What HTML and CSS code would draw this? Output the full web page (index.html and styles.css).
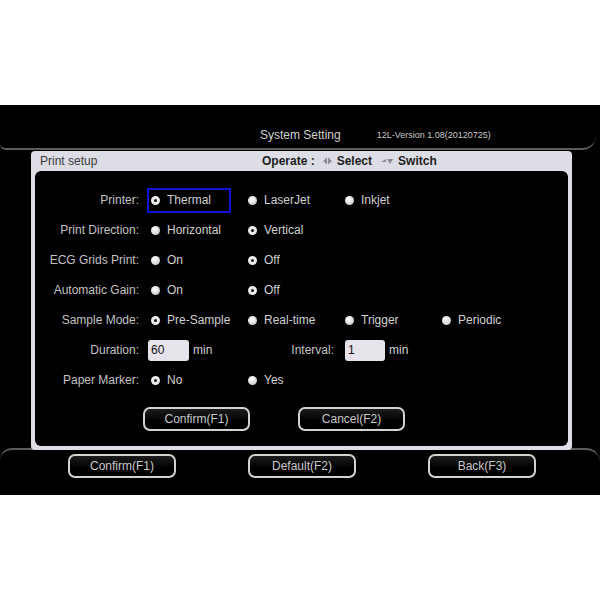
FILE: index.html
```html
<!DOCTYPE html>
<html>
<head>
<meta charset="utf-8">
<title>System Setting</title>
<link rel="stylesheet" href="styles.css">
</head>
<body>
<div class="screen">
  <div class="topbar">
    <span class="title">System Setting</span>
    <span class="version">12L-Version 1.08(20120725)</span>
  </div>
  <div class="panel">
    <div class="phead">
      <span class="ptitle">Print setup</span>
      <span class="operate">Operate :
        <svg class="ico" width="9" height="8" viewBox="0 0 9 8"><path d="M0 4 L4 0.5 L4 7.5 Z M9 4 L5 0.5 L5 7.5 Z" fill="#8a8a90"/></svg>
        Select
        <svg class="ico ico2" width="12" height="8" viewBox="0 0 12 8"><path d="M0 5 L5 2 L5 5 Z" fill="#8a8a90"/><path d="M6 2 L12 2 L9 7 Z" fill="#8a8a90"/></svg>
        Switch</span>
    </div>
    <div class="pbody">
      <div class="form">
        <div class="label">Printer:</div>
        <div class="cell"><span class="opt focus"><i class="radio on"></i>Thermal</span></div>
        <div class="cell"><span class="opt"><i class="radio"></i>LaserJet</span></div>
        <div class="cell"><span class="opt"><i class="radio"></i>Inkjet</span></div>
        <div class="cell"></div>

        <div class="label">Print Direction:</div>
        <div class="cell"><span class="opt"><i class="radio"></i>Horizontal</span></div>
        <div class="cell"><span class="opt"><i class="radio on"></i>Vertical</span></div>
        <div class="cell"></div>
        <div class="cell"></div>

        <div class="label">ECG Grids Print:</div>
        <div class="cell"><span class="opt"><i class="radio"></i>On</span></div>
        <div class="cell"><span class="opt"><i class="radio on"></i>Off</span></div>
        <div class="cell"></div>
        <div class="cell"></div>

        <div class="label">Automatic Gain:</div>
        <div class="cell"><span class="opt"><i class="radio"></i>On</span></div>
        <div class="cell"><span class="opt"><i class="radio on"></i>Off</span></div>
        <div class="cell"></div>
        <div class="cell"></div>

        <div class="label">Sample Mode:</div>
        <div class="cell"><span class="opt"><i class="radio on"></i>Pre-Sample</span></div>
        <div class="cell"><span class="opt"><i class="radio"></i>Real-time</span></div>
        <div class="cell"><span class="opt"><i class="radio"></i>Trigger</span></div>
        <div class="cell"><span class="opt"><i class="radio"></i>Periodic</span></div>

        <div class="label">Duration:</div>
        <div class="cell"><span class="field f1">60</span><span class="unit">min</span></div>
        <div class="label sub">Interval:</div>
        <div class="cell"><span class="field f2">1</span><span class="unit">min</span></div>
        <div class="cell"></div>

        <div class="label">Paper Marker:</div>
        <div class="cell"><span class="opt"><i class="radio on"></i>No</span></div>
        <div class="cell"><span class="opt"><i class="radio"></i>Yes</span></div>
        <div class="cell"></div>
        <div class="cell"></div>
      </div>
      <div class="actions">
        <div class="btn">Confirm(F1)</div>
        <div class="btn">Cancel(F2)</div>
      </div>
    </div>
  </div>
  <div class="footer">
    <div class="btn wide">Confirm(F1)</div>
    <div class="btn wide">Default(F2)</div>
    <div class="btn wide">Back(F3)</div>
  </div>
</div>
</body>
</html>
```
FILE: styles.css
```css
html, body {
  margin: 0;
  padding: 0;
  background: #ffffff;
  font-family: "Liberation Sans", Arial, sans-serif;
  font-size: 12px;
}

.screen {
  margin-top: 105px;
  height: 390px;
  background: #000;
  overflow: hidden;
}

.topbar {
  box-sizing: border-box;
  width: 596px;
  height: 45px;
  border-bottom: 2px solid #5c5c5c;
  border-bottom-left-radius: 6px;
  border-bottom-right-radius: 14px;
  display: flex;
  align-items: baseline;
  padding: 23px 0 0 260px;
}

.title {
  color: #d0d0d0;
  font-size: 12px;
}

.version {
  color: #c8c8c8;
  font-size: 9px;
  margin-left: 36px;
  position: relative;
  top: -1px;
}

.panel {
  position: relative;
  z-index: 1;
  box-sizing: border-box;
  margin: 1px 0 0 31px;
  width: 541px;
  height: 299px;
  background: #dddde5;
  border-radius: 4px;
  padding: 0 4px 4px 4px;
  display: flex;
  flex-direction: column;
}

.phead {
  height: 20px;
  display: flex;
  align-items: center;
  color: #333;
}

.ptitle {
  width: 222px;
  padding-left: 5px;
  color: #3a3a3a;
}

.operate {
  font-weight: bold;
  color: #1c1c1c;
  font-size: 12px;
  display: flex;
  align-items: center;
  gap: 5px;
}

.ico {
  margin-left: 3px;
}

.ico2 {
  margin-left: 4px;
}

.pbody {
  flex: 1;
  background: #000;
  border-radius: 6px;
  padding-top: 14px;
}

.form {
  display: grid;
  grid-template-columns: 112px repeat(4, 97px);
  grid-auto-rows: 30px;
  align-items: center;
}

.label {
  text-align: right;
  padding-right: 8px;
  color: #c2c2c2;
  white-space: nowrap;
}

.label.sub {
  padding-right: 7px;
}

.cell {
  display: flex;
  align-items: center;
  color: #d0d0d0;
}

.opt {
  box-sizing: border-box;
  display: inline-flex;
  align-items: center;
  gap: 7px;
  height: 25px;
  padding: 0 2px;
  border: 2px solid transparent;
  white-space: nowrap;
  color: #d0d0d0;
}

.opt.focus {
  width: 84px;
  border-color: #1212d6;
}

.radio {
  display: inline-block;
  box-sizing: border-box;
  width: 9px;
  height: 9px;
  border-radius: 50%;
  background: radial-gradient(circle at 40% 35%, #ffffff 0%, #e2e2e2 45%, #b8b8b8 100%);
  flex: none;
}

.radio.on {
  background: #111;
  border: 3px solid #ececec;
}

.field {
  box-sizing: border-box;
  height: 21px;
  line-height: 21px;
  background: #e6e4ea;
  border-radius: 3px;
  color: #111;
  padding-left: 3px;
}

.f1 {
  width: 41px;
  margin-left: 1px;
}

.f2 {
  width: 40px;
  margin-left: 4px;
}

.unit {
  margin-left: 4px;
  color: #d0d0d0;
}

.actions {
  display: flex;
  gap: 48px;
  padding-left: 108px;
  margin-top: 12px;
}

.btn {
  box-sizing: border-box;
  width: 107px;
  height: 24px;
  border: 2px solid #d2d2d2;
  border-radius: 7px;
  background: linear-gradient(#1c1c1c, #000 60%);
  color: #c8c8c8;
  display: flex;
  align-items: center;
  justify-content: center;
}

.btn.wide {
  width: 108px;
}

.footer {
  margin-top: -2px;
  border-top: 2px solid #5c5c5c;
  border-top-left-radius: 12px;
  border-top-right-radius: 14px;
  display: flex;
  gap: 72px;
  padding: 4px 0 0 68px;
}
```
